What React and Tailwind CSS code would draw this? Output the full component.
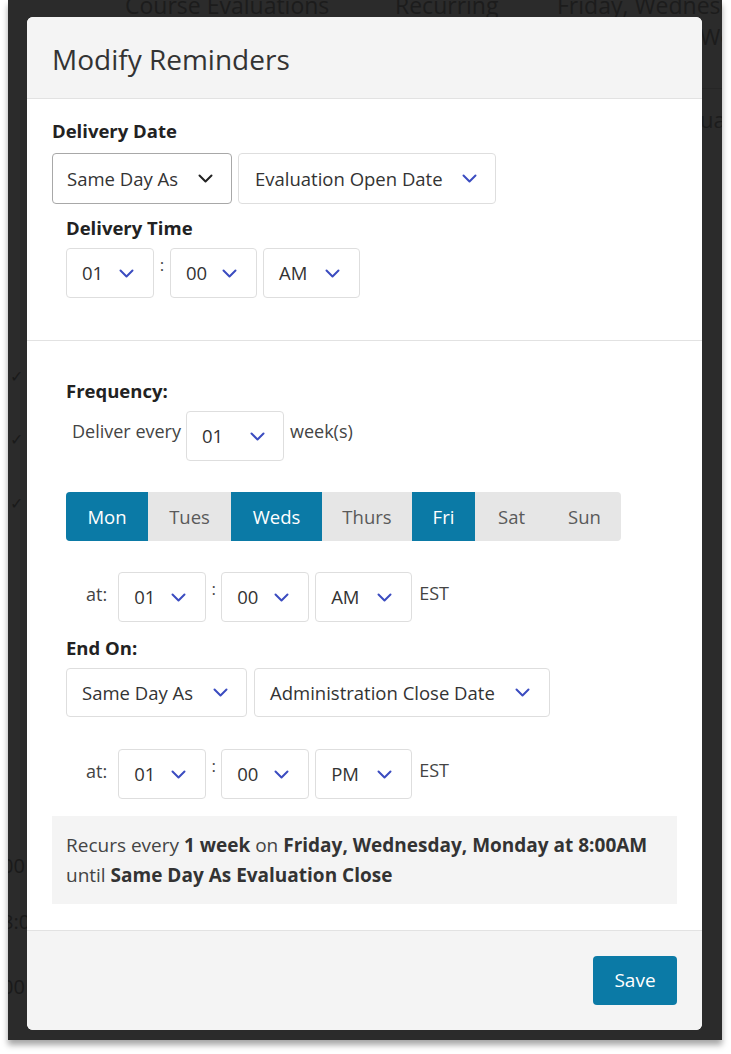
import React, { useState } from 'react';

const font = "font-['Open_Sans','Noto_Sans',sans-serif]";

function Chevron({ dark }) {
  return (
    <svg width="15" height="9" viewBox="0 0 15 9" fill="none" className="shrink-0">
      <polyline
        points="1.5,1.5 7.5,7.5 13.5,1.5"
        stroke={dark ? '#222' : '#3b4cc0'}
        strokeWidth="2"
        strokeLinecap="round"
        strokeLinejoin="round"
      />
    </svg>
  );
}

function Select({ value, w, h = 'h-[50px]', px = 'pl-[15px] pr-[19px]', dark, focused }) {
  return (
    <div
      className={`${w} ${h} ${px} flex items-center justify-between rounded-[4px] border bg-white text-[18.5px] text-[#333] ${
        focused ? 'border-[#a8a8a8]' : 'border-[#dedede]'
      }`}
    >
      <span>{value}</span>
      <Chevron dark={dark} />
    </div>
  );
}

function TimeRow({ ampm }) {
  return (
    <div className="flex items-start">
      <span className="ml-[20px] mr-[11px] mt-[9px] text-[18px] text-[#444]">at:</span>
      <Select value="01" w="w-[88px]" />
      <span className="w-[15px] text-center mt-[4px] text-[17px] text-[#444]">:</span>
      <Select value="00" w="w-[88px]" />
      <div className="w-[6px]" />
      <Select value={ampm} w="w-[97px]" px="pl-[15px] pr-[19px]" />
      <span className="ml-[7px] mt-[8px] text-[18px] text-[#444]">EST</span>
    </div>
  );
}

const days = [
  { d: 'Mon', w: 'w-[82px]' },
  { d: 'Tues', w: 'w-[83px]' },
  { d: 'Weds', w: 'w-[91px]' },
  { d: 'Thurs', w: 'w-[90px]' },
  { d: 'Fri', w: 'w-[63px]' },
  { d: 'Sat', w: 'w-[73px]' },
  { d: 'Sun', w: 'w-[73px]' },
];

export default function App() {
  const [active, setActive] = useState(['Mon', 'Weds', 'Fri']);

  const toggle = (d) =>
    setActive((a) => (a.includes(d) ? a.filter((x) => x !== d) : [...a, d]));

  return (
    <div className={`w-[731px] h-[1054px] bg-white ${font}`}>
      <div className="relative ml-[8px] w-[714px] h-[1040px] overflow-hidden bg-[#2b2b2b] shadow-[0_5px_6px_rgba(0,0,0,0.35)]">
        {/* page content behind the overlay */}
        <div className="absolute left-[117px] top-[-12px] text-[23px] text-[#1c1c1c]">Course Evaluations</div>
        <div className="absolute left-[387px] top-[-12px] text-[23px] text-[#1c1c1c]">Recurring</div>
        <div className="absolute left-[549px] top-[-12px] text-[23px] whitespace-nowrap text-[#1c1c1c]">Friday, Wednesday</div>
        <div className="absolute left-[692px] top-[20px] text-[22px] text-[#1c1c1c]">Wee</div>
        <div className="absolute left-[694px] top-[88px] w-[30px] border-t border-[#262626]" />
        <div className="absolute left-[692px] top-[103px] text-[22px] text-[#1c1c1c]">ua</div>
        <div className="absolute left-[2px] top-[364px] text-[16px] text-[#1a1a1a]">✓</div>
        <div className="absolute left-[2px] top-[427px] text-[16px] text-[#1a1a1a]">✓</div>
        <div className="absolute left-[2px] top-[491px] text-[16px] text-[#1a1a1a]">✓</div>
        <div className="absolute left-[-6px] top-[851px] text-[20px] text-[#1a1a1a]">00</div>
        <div className="absolute left-[-6px] top-[907px] text-[20px] text-[#1a1a1a]">8:0</div>
        <div className="absolute left-[-6px] top-[972px] text-[20px] text-[#1a1a1a]">00</div>

        <div className="relative pl-[19px] pt-[17px]">
          <div className="w-[675px] h-[1013px] overflow-hidden rounded-[6px] bg-white">
            {/* header */}
            <div className="h-[82px] flex items-center px-[25px] bg-[#f4f4f4] border-b border-[#e2e2e2]">
              <h1 className="text-[28px] text-[#333] mt-[2px]">Modify Reminders</h1>
            </div>

            {/* delivery */}
            <div className="h-[242px] px-[25px] pt-[19px] border-b border-[#e2e2e2]">
              <div className="text-[18.5px] leading-[25px] font-bold text-[#222]">Delivery Date</div>
              <div className="mt-[10px] flex gap-[6px]">
                <Select value="Same Day As" w="w-[180px]" h="h-[51px]" px="pl-[14px] pr-[18px]" dark focused />
                <Select value="Evaluation Open Date" w="w-[258px]" h="h-[51px]" px="pl-[16px] pr-[18px]" />
              </div>
              <div className="ml-[14px] mt-[11px] text-[18.5px] leading-[25px] font-bold text-[#222]">Delivery Time</div>
              <div className="ml-[14px] mt-[8px] flex items-start">
                <Select value="01" w="w-[88px]" />
                <span className="w-[16px] text-center mt-[4px] text-[17px] text-[#444]">:</span>
                <Select value="00" w="w-[87px]" />
                <div className="w-[6px]" />
                <Select value="AM" w="w-[97px]" />
              </div>
            </div>

            {/* recurrence */}
            <div className="h-[590px] px-[25px] pt-[37px] border-b border-[#e2e2e2]">
              <div className="ml-[14px]">
                <div className="text-[18.5px] leading-[25px] font-bold text-[#222]">Frequency:</div>
                <div className="mt-[8px] flex items-start">
                  <span className="ml-[6px] mr-[5px] mt-[7px] text-[18px] text-[#444]">Deliver every</span>
                  <Select value="01" w="w-[98px]" px="pl-[15px] pr-[18px]" />
                  <span className="ml-[6px] mt-[7px] text-[18px] text-[#444]">week(s)</span>
                </div>

                <div className="mt-[31px] flex w-[555px] h-[49px] overflow-hidden rounded-[4px] bg-[#e6e6e6]">
                  {days.map(({ d, w }) => (
                    <button
                      key={d}
                      onClick={() => toggle(d)}
                      className={`${w} h-full text-[18.5px] ${
                        active.includes(d) ? 'bg-[#0b7aa6] text-white' : 'text-[#5a5a5a]'
                      }`}
                    >
                      {d}
                    </button>
                  ))}
                </div>

                <div className="mt-[31px]">
                  <TimeRow ampm="AM" />
                </div>

                <div className="mt-[13px] text-[18.5px] leading-[25px] font-bold text-[#222]">End On:</div>
                <div className="mt-[8px] flex gap-[7px]">
                  <Select value="Same Day As" w="w-[181px]" h="h-[49px]" px="pl-[15px] pr-[18px]" />
                  <Select value="Administration Close Date" w="w-[296px]" h="h-[49px]" px="pl-[15px] pr-[19px]" />
                </div>

                <div className="mt-[32px]">
                  <TimeRow ampm="PM" />
                </div>
              </div>

              <div className="mt-[17px] h-[88px] bg-[#f4f4f4] px-[14px] py-[14px] text-[19px] leading-[30px] text-[#444] whitespace-nowrap">
                Recurs every <b className="text-[#333]">1 week</b> on{' '}
                <b className="text-[#333]">Friday, Wednesday, Monday at 8:00AM</b>
                <br />
                until <b className="text-[#333]">Same Day As Evaluation Close</b>
              </div>
            </div>

            {/* footer */}
            <div className="h-[99px] bg-[#f4f4f4] flex justify-end items-start px-[25px] pt-[25px]">
              <button className="w-[84px] h-[49px] rounded-[4px] bg-[#0b7aa6] text-[19px] text-white">
                Save
              </button>
            </div>
          </div>
        </div>
      </div>
    </div>
  );
}
